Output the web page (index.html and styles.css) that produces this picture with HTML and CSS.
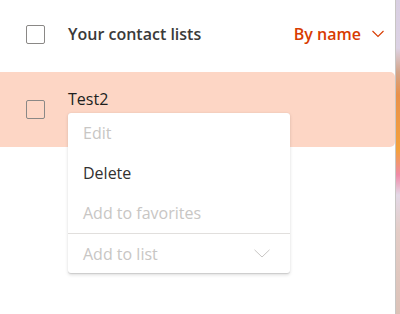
FILE: index.html
```html
<!DOCTYPE html>
<html lang="en">
<head>
    <meta charset="UTF-8">
    <meta name="viewport" content="width=device-width, initial-scale=1.0">
    <title>Contact lists</title>
    <link rel="stylesheet" href="styles.css">
</head>
<body>
    <div class="page">
        <div class="lists">
            <div class="list-header">
                <span class="checkbox"></span>
                <span class="header-title">Your contact lists</span>
                <button class="sort">
                    By name
                    <svg width="12" height="8" viewBox="0 0 12 8"><path d="M0.5 1 L6 6.5 L11.5 1" fill="none" stroke="currentColor" stroke-width="1.1"/></svg>
                </button>
            </div>
            <div class="list-row selected">
                <span class="checkbox row-check"></span>
                <div class="row-name">
                    Test2
                    <ul class="menu">
                        <li class="menu-item disabled">Edit</li>
                        <li class="menu-item">Delete</li>
                        <li class="menu-item disabled">Add to favorites</li>
                        <li class="menu-item disabled with-divider">
                            Add to list
                            <svg width="16" height="9" viewBox="0 0 16 9"><path d="M0.5 0.8 L8 8 L15.5 0.8" fill="none" stroke="currentColor" stroke-width="1"/></svg>
                        </li>
                    </ul>
                </div>
            </div>
        </div>
        <div class="wallpaper"></div>
    </div>
</body>
</html>
```

FILE: styles.css
```css
body {
    margin: 0;
    font-family: "Open Sans", "Noto Sans", sans-serif;
    color: #323130;
    background: #fff;
}
.page {
    display: flex;
    height: 314px;
    overflow: hidden;
}
.lists {
    flex: 1;
    display: flex;
    flex-direction: column;
    gap: 4px;
}
.list-header {
    height: 68px;
    display: flex;
    align-items: center;
    padding: 0 11px 0 26px;
}
.checkbox {
    width: 17px;
    height: 17px;
    border: 1.5px solid #8a8886;
    border-radius: 2px;
    flex-shrink: 0;
}
.header-title {
    margin-left: 23px;
    font-size: 16px;
    font-weight: 600;
    color: #3b3a39;
    flex: 1;
}
.sort {
    display: flex;
    align-items: center;
    gap: 11px;
    border: none;
    background: none;
    padding: 0;
    font-family: inherit;
    font-size: 16px;
    font-weight: 600;
    color: #d83b01;
}
.list-row {
    height: 75px;
    display: flex;
    align-items: flex-start;
    padding: 16px 0 0 26px;
    box-sizing: border-box;
}
.selected {
    background: #fdd6c5;
    border-radius: 0 5px 5px 0;
}
.row-check {
    margin-top: 12px;
}
.row-name {
    position: relative;
    margin-left: 23px;
    font-size: 16px;
    line-height: 22px;
    color: #201f1e;
}
.menu {
    position: absolute;
    top: 25px;
    left: 0;
    width: 222px;
    margin: 0;
    padding: 0;
    list-style: none;
    background: #fff;
    border-radius: 3px;
    box-shadow: 0 1.6px 3.6px rgba(0, 0, 0, 0.13), 0 0.3px 0.9px rgba(0, 0, 0, 0.11);
}
.menu-item {
    height: 40px;
    display: flex;
    align-items: center;
    justify-content: space-between;
    padding: 0 20px 0 15px;
    font-size: 16px;
    color: #323130;
}
.menu-item.disabled {
    color: #c8c6c4;
}
.with-divider {
    border-top: 1px solid #e1dfdd;
    height: 39px;
}
.wallpaper {
    width: 4px;
    border-left: 1px solid #c8c6c4;
    background: linear-gradient(#d9cfe2 0, #dcd2e4 48px, #d4a58a 72px, #e8904a 95px, #f3a13c 150px, #f08aa8 175px, #e3d8e6 195px, #e4ccc6 230px, #dcc2b8 314px);
}
```
